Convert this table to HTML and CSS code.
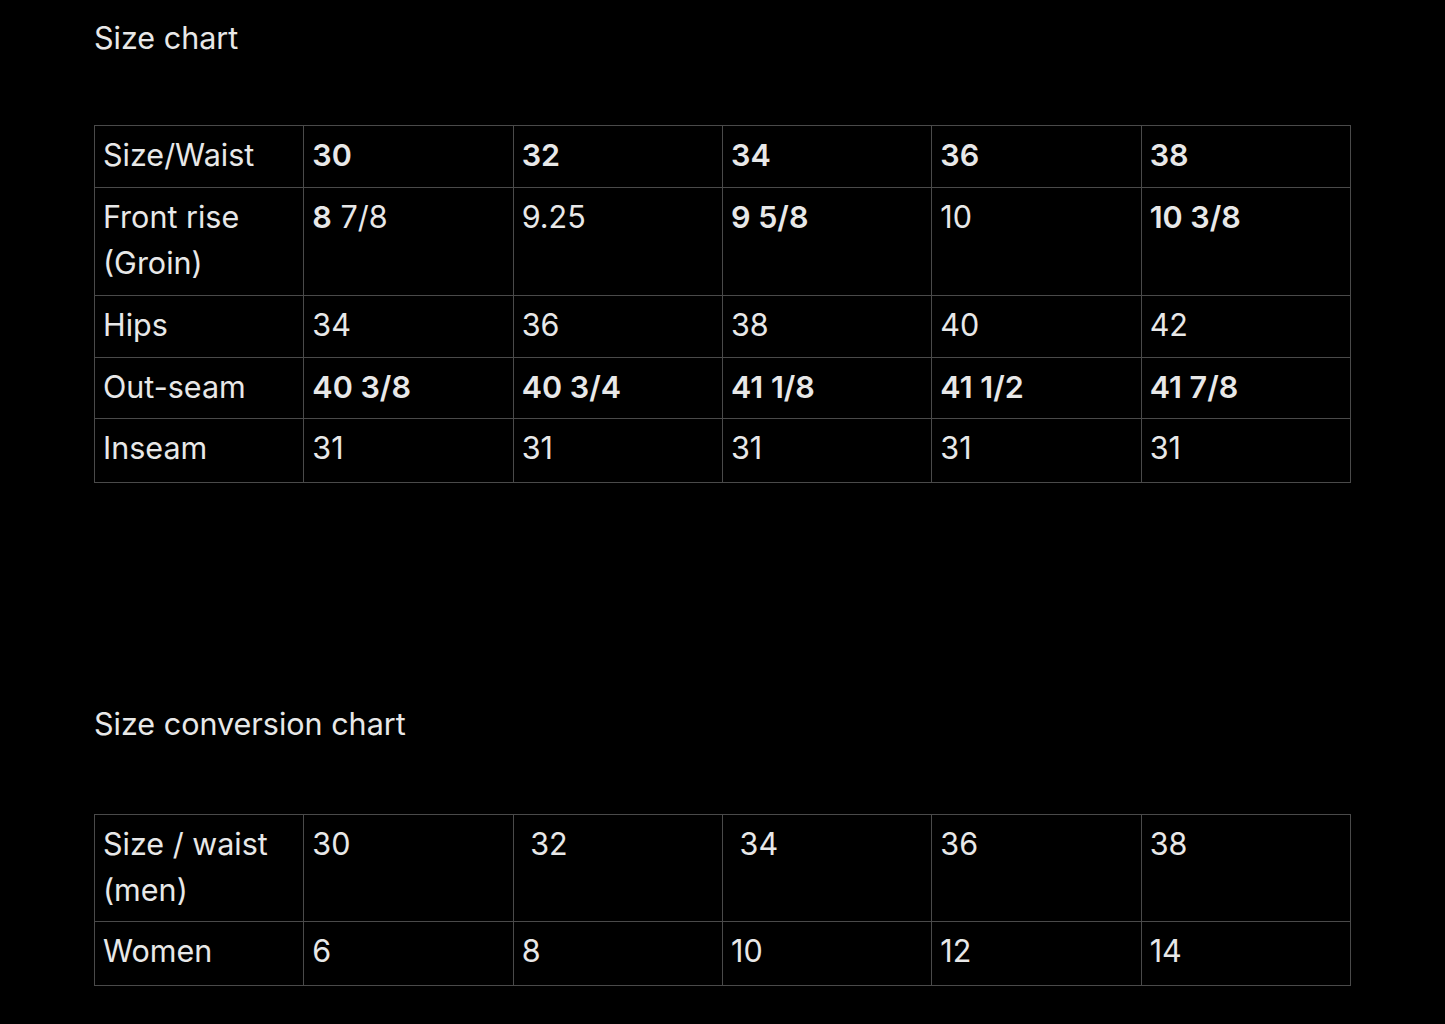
FILE: index.html
```html
<!DOCTYPE html>
<html>
<head>
<meta charset="utf-8">
<link rel="stylesheet" href="styles.css">
</head>
<body>
<main class="page">
  <h2 class="title">Size chart</h2>
  <table class="chart">
    <tr>
      <td>Size/Waist</td><td class="b">30</td><td class="b">32</td><td class="b">34</td><td class="b">36</td><td class="b">38</td>
    </tr>
    <tr>
      <td>Front rise<br>(Groin)</td><td><b>8</b> 7/8</td><td>9.25</td><td class="b">9 5/8</td><td>10</td><td class="b">10 3/8</td>
    </tr>
    <tr>
      <td>Hips</td><td>34</td><td>36</td><td>38</td><td>40</td><td>42</td>
    </tr>
    <tr class="short">
      <td>Out-seam</td><td class="b">40 3/8</td><td class="b">40 3/4</td><td class="b">41 1/8</td><td class="b">41 1/2</td><td class="b">41 7/8</td>
    </tr>
    <tr class="last">
      <td>Inseam</td><td>31</td><td>31</td><td>31</td><td>31</td><td>31</td>
    </tr>
  </table>

  <h2 class="title second">Size conversion chart</h2>
  <table class="chart">
    <tr class="short">
      <td>Size / waist<br>(men)</td><td>30</td><td>&nbsp;32</td><td>&nbsp;34</td><td>36</td><td>38</td>
    </tr>
    <tr class="last">
      <td>Women</td><td>6</td><td>8</td><td>10</td><td>12</td><td>14</td>
    </tr>
  </table>
</main>
</body>
</html>
```

FILE: styles.css
```css
html, body {
  margin: 0;
  background: #000;
}
body {
  font-family: Inter, "Noto Sans", "Liberation Sans", sans-serif;
  color: #e8e8e8;
}
.page {
  padding: 0 94px;
  width: 1257px;
}
.title {
  margin: 0;
  padding-top: 20px;
  height: 125px;
  box-sizing: border-box;
  font-size: 30.5px;
  font-weight: 400;
  line-height: 36px;
}
.second {
  padding-top: 223px;
  height: 331px;
}
.chart {
  width: 1257px;
  border-collapse: collapse;
  table-layout: fixed;
  font-size: 30.5px;
  line-height: 46px;
}
.chart td {
  border: 1px solid #4a4a4a;
  padding: 6px 8px 9px;
  vertical-align: top;
}
.chart tr.short td {
  padding-bottom: 8px;
}
.chart tr.last td {
  padding-bottom: 11px;
}
.chart td.b, .chart b {
  font-weight: 600;
}
```
